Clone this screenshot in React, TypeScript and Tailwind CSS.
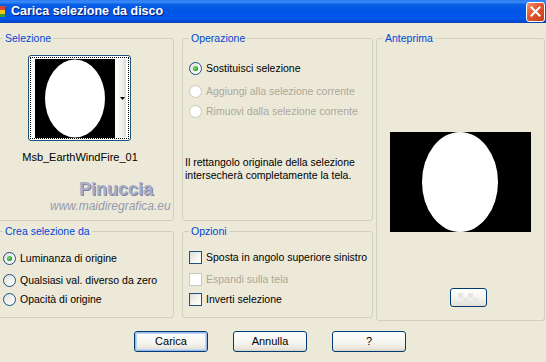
import React from 'react';

const font = { fontFamily: '"Liberation Sans", Arial, sans-serif' };

function Radio({ checked = false, disabled = false }: { checked?: boolean; disabled?: boolean }) {
  return (
    <span
      className={`relative inline-flex w-[13px] h-[13px] shrink-0 rounded-full border items-center justify-center ${
        disabled
          ? 'border-[#cac8bb] bg-white'
          : 'border-[#1c5180] bg-[linear-gradient(135deg,#dcdcd7_0%,#f4f4f0_55%,#ffffff_100%)]'
      }`}
    >
      {checked && (
        <span className="w-[5px] h-[5px] rounded-full bg-[radial-gradient(circle_at_40%_40%,#8ce48c_0%,#21a121_60%,#1a8a1a_100%)]" />
      )}
    </span>
  );
}

function Check({ disabled = false }: { disabled?: boolean }) {
  return (
    <span
      className={`inline-block w-[13px] h-[13px] shrink-0 border ${
        disabled
          ? 'border-[#cac8bb] bg-white'
          : 'border-[#1c5180] bg-[linear-gradient(135deg,#dcdcd7_0%,#f4f4f0_55%,#ffffff_100%)]'
      }`}
    />
  );
}

function XpButton({ label, isDefault = false }: { label: string; isDefault?: boolean }) {
  return (
    <button className="w-[74px] h-[21px] rounded-[3px] border border-[#003c74] bg-[linear-gradient(to_bottom,#ffffff_0%,#f4f3ee_60%,#e6e3d8_90%,#d6d0c5_100%)] p-0">
      <span
        className={`flex h-full w-full items-center justify-center rounded-[2px] text-[11px] text-black ${
          isDefault ? 'border border-[#98b8ea] shadow-[inset_0_0_0_1px_#c0d5f5]' : ''
        }`}
      >
        {label}
      </span>
    </button>
  );
}

function Legend({ children }: { children: React.ReactNode }) {
  return <legend className="ml-[6px] px-[2px] leading-[13px] text-[#0046d5]">{children}</legend>;
}

function Blob({ w, h, cx, rx, ry }: { w: number; h: number; cx: number; rx: number; ry: number }) {
  return (
    <svg width={w} height={h} viewBox={`0 0 ${w} ${h}`} className="block">
      <rect width={w} height={h} fill="#000" />
      <ellipse cx={cx} cy={h / 2} rx={rx} ry={ry} fill="#fff" />
    </svg>
  );
}

export default function App() {
  return (
    <div className="w-[546px] h-[362px] overflow-hidden bg-[#ece9d8] text-[10.5px] leading-[13px] text-black whitespace-nowrap" style={font}>
      {/* Title bar */}
      <div className="h-[23px] flex items-center bg-[linear-gradient(to_bottom,#2a7af2_0%,#3d8cf8_8%,#0a5fe6_20%,#0055e5_45%,#0057ea_80%,#0049d4_93%,#0a3fb0_100%)]">
        <svg width="8" height="16" viewBox="0 0 8 16" className="shrink-0">
          <rect x="0" y="2" width="6" height="4" fill="#d9472b" />
          <rect x="0" y="6" width="6" height="4" fill="#f0c419" />
          <rect x="0" y="10" width="5" height="3" fill="#3a9a3a" />
          <rect x="5" y="3" width="1" height="10" fill="#7a3b1a" />
        </svg>
        <span className="ml-[3px] text-[12.5px] font-bold text-white [text-shadow:1px_1px_0_#0a1e78]">
          Carica selezione da disco
        </span>
        <div className="ml-auto mr-[1px] w-[19px] h-[20px] rounded-[3px] border border-white bg-[linear-gradient(135deg,#f0916e_0%,#e2552c_45%,#c4401a_100%)] flex items-center justify-center">
          <svg width="11" height="11" viewBox="0 0 11 11">
            <path d="M1.5 1.5 L9.5 9.5 M9.5 1.5 L1.5 9.5" stroke="#fff" strokeWidth="2" strokeLinecap="square" />
          </svg>
        </div>
      </div>

      {/* Body */}
      <div className="flex ml-[-4px] pt-[9px]">
        <div className="flex flex-col gap-[4px]">
          <div className="flex gap-[8px]">
            <fieldset className="relative w-[178px] h-[189px] border border-[#d0d0bf] rounded-[3px]">
              <Legend>Selezione</Legend>
              <div className="flex flex-col items-center">
                <div className="mt-[10px] ml-[-12px] w-[103px] h-[86px] rounded-[3px] border border-[#1c5180] bg-white p-[1px]">
                  <div className="flex h-full border border-dotted border-black pl-[4px] pt-[1px] pb-[1px]">
                    <Blob w={80} h={79} cx={40} rx={30} ry={39} />
                    <div className="relative flex-1 mr-[2px] bg-[linear-gradient(to_right,#ffffff_0%,#f0f0ec_60%,#dcdcd6_100%)] flex items-center justify-end pr-[1px]">
                      <svg width="5" height="3" viewBox="0 0 5 3">
                        <path d="M0 0 H5 L2.5 3 Z" fill="#000" />
                      </svg>
                    </div>
                  </div>
                </div>
                <div className="mt-[10px] ml-[-10px] text-[11px]">Msb_EarthWindFire_01</div>
              </div>
              {/* watermark */}
              <div className="absolute left-[53px] top-[134px] flex flex-col items-start">
                <span className="ml-[29px] text-[18px] font-bold leading-[20px] text-[#a8adc8] [text-shadow:1px_1px_0_#7c819e]">
                  Pinuccia
                </span>
                <span className="text-[12px] italic leading-[14px] text-[#9599b0]">
                  www.maidiregrafica.eu
                </span>
              </div>
            </fieldset>

            <fieldset className="w-[191px] h-[189px] border border-[#d0d0bf] rounded-[3px]">
              <Legend>Operazione</Legend>
              <div className="flex flex-col pl-[6px]">
                <label className="mt-[17px] flex items-center gap-[4px]">
                  <Radio checked />
                  <span>Sostituisci selezione</span>
                </label>
                <label className="mt-[10px] flex items-center gap-[4px] text-[#aca899]">
                  <Radio disabled />
                  <span>Aggiungi alla selezione corrente</span>
                </label>
                <label className="mt-[7px] flex items-center gap-[4px] text-[#aca899]">
                  <Radio disabled />
                  <span>Rimuovi dalla selezione corrente</span>
                </label>
              </div>
              <p className="mt-[38px] pl-[2px]">
                Il rettangolo originale della selezione
                <br />
                intersecherà completamente la tela.
              </p>
            </fieldset>
          </div>

          <div className="flex gap-[8px]">
            <fieldset className="w-[178px] h-[93px] border border-[#d0d0bf] rounded-[3px]">
              <Legend>Crea selezione da</Legend>
              <div className="flex flex-col pl-[6px] pt-[14px]">
                <label className="flex items-center gap-[4px]">
                  <Radio checked />
                  <span>Luminanza di origine</span>
                </label>
                <label className="mt-[9px] flex items-center gap-[4px]">
                  <Radio />
                  <span>Qualsiasi val. diverso da zero</span>
                </label>
                <label className="mt-[6px] flex items-center gap-[4px]">
                  <Radio />
                  <span>Opacità di origine</span>
                </label>
              </div>
            </fieldset>

            <fieldset className="w-[191px] h-[93px] border border-[#d0d0bf] rounded-[3px]">
              <Legend>Opzioni</Legend>
              <div className="flex flex-col pl-[6px] pt-[13px]">
                <label className="flex items-center gap-[4px]">
                  <Check />
                  <span>Sposta in angolo superiore sinistro</span>
                </label>
                <label className="mt-[9px] flex items-center gap-[4px] text-[#aca899]">
                  <Check disabled />
                  <span>Espandi sulla tela</span>
                </label>
                <label className="mt-[7px] flex items-center gap-[4px]">
                  <Check />
                  <span>Inverti selezione</span>
                </label>
              </div>
            </fieldset>
          </div>
        </div>

        <fieldset className="ml-[3px] w-[169px] h-[289px] border border-[#d0d0bf] rounded-[3px]">
          <Legend>Anteprima</Legend>
          <div className="flex flex-col items-center">
            <div className="mt-[87px] ml-[-1px]">
              <Blob w={141} h={100} cx={70} rx={38} ry={50} />
            </div>
            <div className="mt-[56px] ml-[15px] w-[37px] h-[19px] rounded-[3px] border border-[#003c74] bg-[linear-gradient(to_bottom,#ffffff_0%,#f2f1ec_60%,#e3e0d6_100%)] flex items-center justify-center">
              <svg width="20" height="10" viewBox="0 0 20 10">
                <rect x="0" y="0" width="5" height="5" fill="#e6e6e6" />
                <rect x="10" y="0" width="5" height="5" fill="#e6e6e6" />
                <rect x="5" y="5" width="5" height="5" fill="#e6e6e6" />
                <rect x="15" y="5" width="5" height="5" fill="#e6e6e6" />
              </svg>
            </div>
          </div>
        </fieldset>
      </div>

      {/* Buttons */}
      <div className="flex gap-[25px] pl-[134px] mt-[10px]">
        <XpButton label="Carica" isDefault />
        <XpButton label="Annulla" />
        <XpButton label="?" />
      </div>
    </div>
  );
}
